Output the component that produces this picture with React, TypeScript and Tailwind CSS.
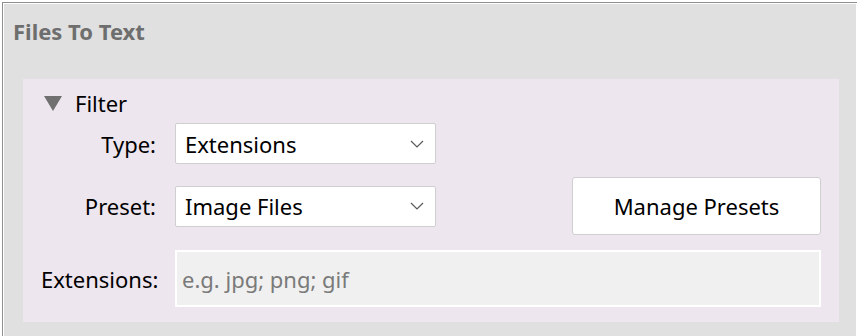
import { useState } from "react";

const Chevron = () => (
  <svg width="14" height="8" viewBox="0 0 14 8" className="shrink-0">
    <path d="M1 1l6 6 6-6" fill="none" stroke="#5a5a5a" strokeWidth="1.2" />
  </svg>
);

interface SelectProps {
  value: string;
}

const Select = ({ value }: SelectProps) => (
  <div className="flex h-[41px] w-[261px] items-center justify-between rounded-[2px] border border-[#cfcfcf] bg-white pl-[9px] pr-[11px] text-black">
    <span>{value}</span>
    <Chevron />
  </div>
);

const App = () => {
  const [open] = useState(true);

  return (
    <div
      className="h-[336px] w-[858px] overflow-hidden bg-white pl-[2px] pt-[2px] text-[22px] leading-none"
      style={{ fontFamily: '"Noto Sans", "Liberation Sans", sans-serif' }}
    >
      <div className="h-full w-[855px] border-l border-t border-[#8f8f8f] bg-[#e0e0e0]">
        <div className="h-full border-l border-t border-r border-white pl-[9px] pr-[17px]">
          {/* group title */}
          <div className="pt-[16px] text-[22px] font-bold text-[#6e6e6e]">Files To Text</div>

          {/* filter panel */}
          <div className="ml-[10px] mt-[37px] bg-[#ede6ee] px-[18px] pb-[15px] pt-[12px]">
            <div className="flex h-[24px] items-center gap-[12px] pl-[2px]">
              <svg width="20" height="17" viewBox="0 0 20 17">
                <path d="M1 1h18L10 16z" fill="#707070" />
              </svg>
              <span className="text-black">Filter</span>
            </div>

            {open && (
              <div className="mt-[8px] flex flex-col">
                <div className="flex items-center gap-[19px]">
                  <span className="w-[115px] text-right text-black">Type:</span>
                  <Select value="Extensions" />
                </div>

                <div className="mt-[13px] flex h-[58px] items-center gap-[19px]">
                  <span className="w-[115px] text-right text-black">Preset:</span>
                  <Select value="Image Files" />
                  <div className="flex-1" />
                  <button className="flex h-[58px] w-[249px] items-center justify-center rounded-[3px] border border-[#cfcfcf] bg-white text-black">
                    Manage Presets
                  </button>
                </div>

                <div className="mt-[15px] flex items-center gap-[19px]">
                  <span className="w-[115px] whitespace-nowrap text-right text-black">Extensions:</span>
                  <div className="flex h-[57px] flex-1 items-center border-2 border-white bg-[#f0f0f0] pl-[5px] text-[#7a7a7a]">
                    e.g. jpg; png; gif
                  </div>
                </div>
              </div>
            )}
          </div>
        </div>
      </div>
    </div>
  );
};

export default App;
